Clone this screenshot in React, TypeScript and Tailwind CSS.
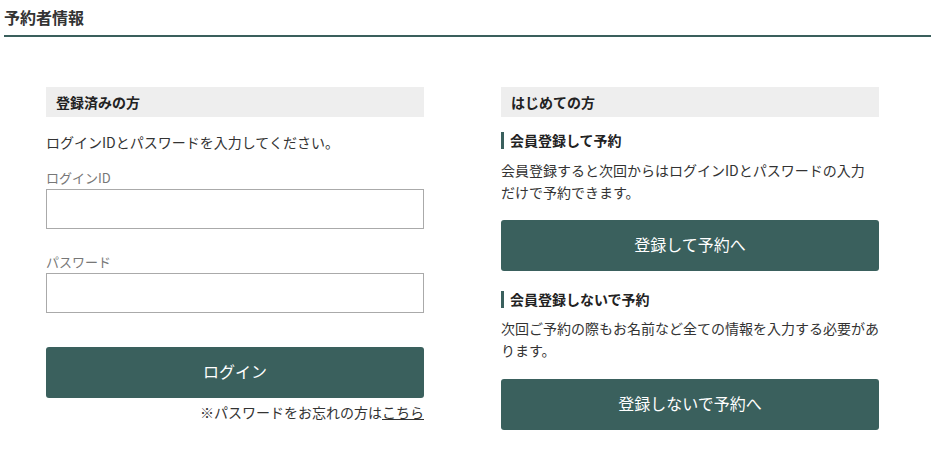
export default function App() {
    return (
        <div className="w-[941px] h-[457px] bg-white text-[#333] font-['Noto_Sans_CJK_JP','Noto_Sans',sans-serif] overflow-hidden">
            {/* Page title */}
            <div className="ml-[4px] w-[927px] h-[37px] border-b-2 border-[#3a5f5c]">
                <h1 className="text-[16px] font-bold leading-[34px]">予約者情報</h1>
            </div>

            <div className="flex mt-[50px] ml-[46px] gap-[77px]">
                {/* Registered users */}
                <div className="w-[378px] flex flex-col">
                    <div className="h-[30px] bg-[#eeeeee] pl-[10px] text-[14px] font-bold leading-[30px] text-[#222]">
                        登録済みの方
                    </div>
                    <p className="mt-[15px] text-[14px] leading-[20px]">
                        ログインIDとパスワードを入力してください。
                    </p>
                    <label className="mt-[17px] text-[13px] leading-[18px] text-[#777]">ログインID</label>
                    <input
                        type="text"
                        className="mt-[2px] h-[40px] w-full border border-[#aaaaaa] bg-white outline-none"
                    />
                    <label className="mt-[24px] text-[13px] leading-[18px] text-[#777]">パスワード</label>
                    <input
                        type="password"
                        className="mt-[2px] h-[40px] w-full border border-[#aaaaaa] bg-white outline-none"
                    />
                    <button className="mt-[34px] h-[51px] w-full rounded-[3px] bg-[#3a605d] pb-[3px] text-white text-[16px]">
                        ログイン
                    </button>
                    <p className="mt-[4px] text-right text-[14px] leading-[20px]">
                        ※パスワードをお忘れの方は<a className="underline">こちら</a>
                    </p>
                </div>

                {/* First time users */}
                <div className="w-[378px] flex flex-col">
                    <div className="h-[30px] bg-[#eeeeee] pl-[10px] text-[14px] font-bold leading-[30px] text-[#222]">
                        はじめての方
                    </div>
                    <h3 className="mt-[15px] border-l-[3px] border-[#3a605d] pl-[6px] text-[14px] font-bold leading-[17px] text-[#222]">
                        会員登録して予約
                    </h3>
                    <p className="mt-[10px] text-[14px] leading-[22px]">
                        会員登録すると次回からはログインIDとパスワードの入力
                        <br />
                        だけで予約できます。
                    </p>
                    <button className="mt-[17px] h-[51px] w-full rounded-[3px] bg-[#3a605d] pb-[3px] text-white text-[16px]">
                        登録して予約へ
                    </button>
                    <h3 className="mt-[20px] border-l-[3px] border-[#3a605d] pl-[6px] text-[14px] font-bold leading-[17px] text-[#222]">
                        会員登録しないで予約
                    </h3>
                    <p className="mt-[9px] text-[14px] leading-[22px] whitespace-nowrap">
                        次回ご予約の際もお名前など全ての情報を入力する必要があ
                        <br />
                        ります。
                    </p>
                    <button className="mt-[18px] h-[51px] w-full rounded-[3px] bg-[#3a605d] pb-[3px] text-white text-[16px]">
                        登録しないで予約へ
                    </button>
                </div>
            </div>
        </div>
    )
}
